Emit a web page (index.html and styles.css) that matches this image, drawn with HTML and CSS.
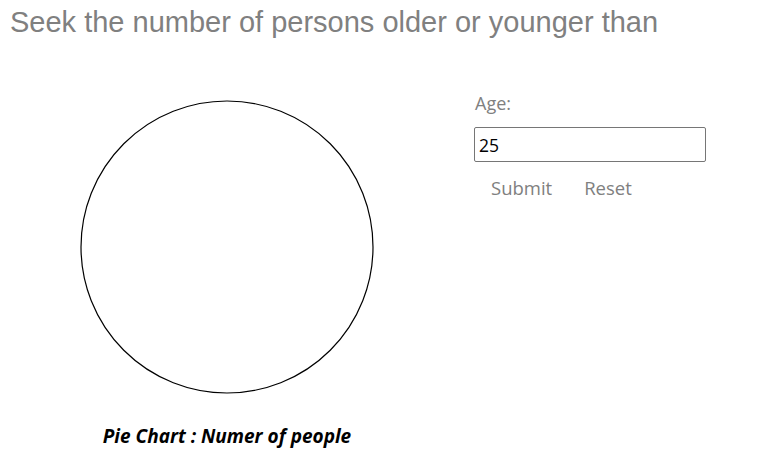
FILE: index.html
```html
<!DOCTYPE html>
<html>
<head>
<meta charset="utf-8">
<link rel="stylesheet" href="styles.css">
</head>
<body>
<h1 class="title">Seek the number of persons older or younger than</h1>
<div class="main">
  <div class="chart">
    <svg class="pie" width="296" height="296" viewBox="0 0 296 296">
      <circle cx="148" cy="148" r="146" fill="#fff" stroke="#000" stroke-width="1.2"/>
    </svg>
    <div class="caption">Pie Chart : Numer of people</div>
  </div>
  <form class="form">
    <label class="label">Age:</label>
    <input class="input" type="text" value="25">
    <div class="buttons">
      <button class="btn" type="button">Submit</button>
      <button class="btn" type="button">Reset</button>
    </div>
  </form>
</div>
</body>
</html>
```
FILE: styles.css
```css
html, body { margin: 0; padding: 0; background: #fff; }
.title {
  margin: 0;
  padding: 6px 0 0 10px;
  font-family: "Liberation Sans", Arial, sans-serif;
  font-weight: normal;
  font-size: 29px;
  line-height: 32px;
  color: #808080;
  white-space: nowrap;
}
.main {
  display: flex;
  align-items: flex-start;
}
.chart {
  width: 300px;
  margin-left: 79px;
  margin-top: 61px;
  display: flex;
  flex-direction: column;
  align-items: center;
}
.pie { display: block; margin-left: -4px; }
.caption {
  margin-top: 28px;
  font-family: "Open Sans", "Noto Sans", sans-serif;
  font-weight: bold;
  font-style: italic;
  font-size: 19px;
  color: #000;
  margin-left: -4px;
  white-space: nowrap;
}
.form {
  margin-left: 95px;
  margin-top: 53px;
  display: flex;
  flex-direction: column;
  align-items: flex-start;
  font-family: "Open Sans", "Noto Sans", sans-serif;
}
.label {
  font-size: 18px;
  color: #808080;
  line-height: 24px;
  margin-left: 1px;
}
.input {
  margin-top: 12px;
  width: 232px;
  height: 35px;
  box-sizing: border-box;
  border: 1px solid #767676;
  border-radius: 2px;
  padding: 0 4px;
  font-family: "Open Sans", "Noto Sans", sans-serif;
  font-size: 17.5px;
  color: #000;
  outline: none;
}
.buttons { display: flex; gap: 16px; margin-top: 14px; margin-left: 9px; }
.btn {
  background: none;
  border: none;
  font-family: "Open Sans", "Noto Sans", sans-serif;
  font-size: 18.5px;
  color: #808080;
  padding: 0 8px;
  line-height: 24px;
}
```
